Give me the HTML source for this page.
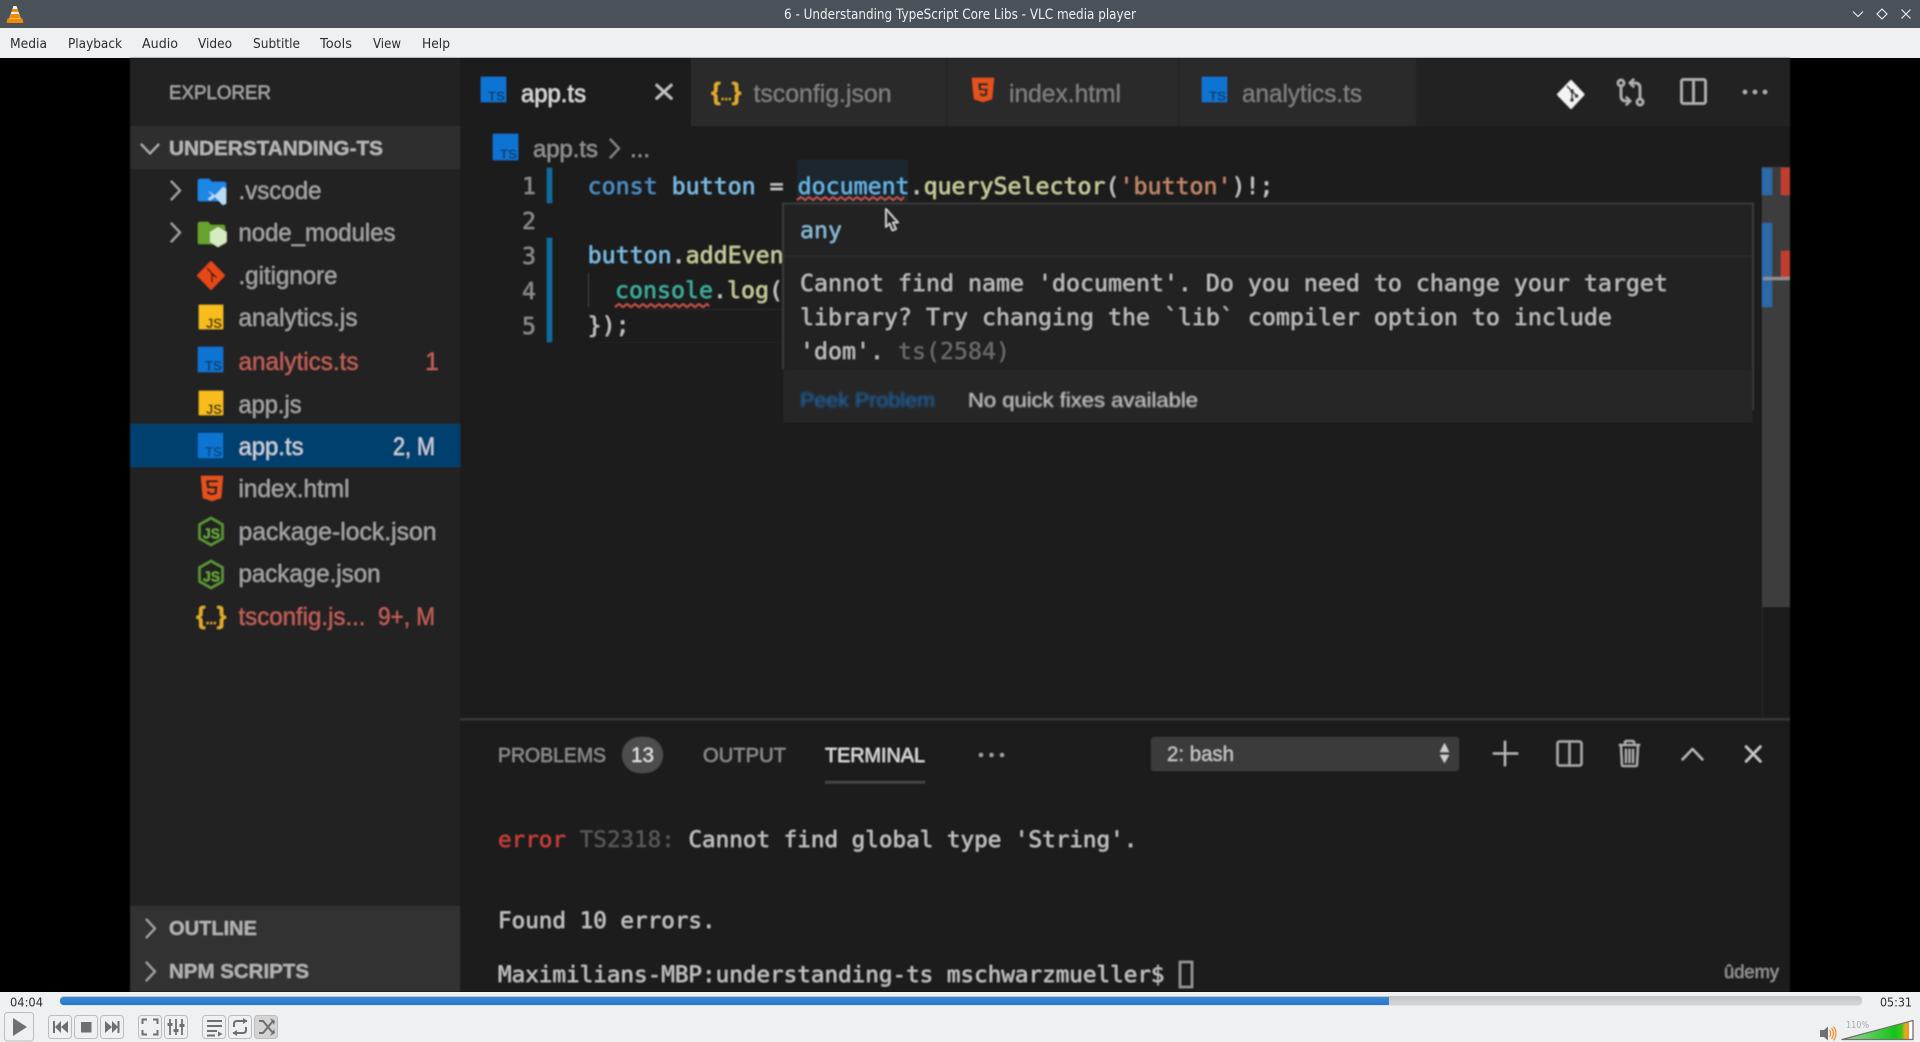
<!DOCTYPE html>
<html><head><meta charset="utf-8"><title>6 - Understanding TypeScript Core Libs - VLC media player</title>
<style>
html,body{margin:0;padding:0;background:#000;width:1920px;height:1042px;overflow:hidden}
svg{display:block}
text{white-space:pre}
.s{font-family:"Liberation Sans",sans-serif}
.m{font-family:"DejaVu Sans Mono","Liberation Mono",monospace}
.u{font-family:"DejaVu Sans","Liberation Sans",sans-serif}
.row{font-family:"Liberation Sans",sans-serif;font-size:25px;fill:#a6a6a6}
.code{font-family:"DejaVu Sans Mono","Liberation Mono",monospace;font-size:23.25px}
.term{font-family:"DejaVu Sans Mono","Liberation Mono",monospace;font-size:22.6px;fill:#c6c6c6}
.tb{fill:none;stroke:#bdbdbd;stroke-width:1}
.ic{fill:#6f6f6f}
.menu{font-family:"DejaVu Sans","Liberation Sans",sans-serif;font-size:13px;fill:#2c2c2c}
</style></head><body>
<svg width="1920" height="1042" viewBox="0 0 1920 1042" xmlns="http://www.w3.org/2000/svg">
<defs>
<filter id="b1" x="-2%" y="-2%" width="104%" height="104%"><feGaussianBlur stdDeviation="0.8"/></filter>
<filter id="b2" x="-5%" y="-20%" width="110%" height="140%"><feGaussianBlur stdDeviation="1.200"/></filter>
<filter id="b3" x="-5%" y="-20%" width="110%" height="140%"><feGaussianBlur stdDeviation="0.5"/></filter>
<linearGradient id="gr" x1="0" y1="0" x2="0" y2="1"><stop offset="0" stop-color="#c2c3c4"/><stop offset="1" stop-color="#d6d7d8"/></linearGradient>
<linearGradient id="vol" x1="1841" y1="0" x2="1913" y2="0" gradientUnits="userSpaceOnUse"><stop offset="0" stop-color="#a6d99a"/><stop offset=".75" stop-color="#12c41a"/><stop offset=".84" stop-color="#40c418"/><stop offset=".9" stop-color="#f3a81c"/><stop offset=".94" stop-color="#f28a12"/><stop offset=".945" stop-color="#fff"/><stop offset="1" stop-color="#fff"/></linearGradient>
<linearGradient id="blue" x1="0" y1="0" x2="0" y2="1"><stop offset="0" stop-color="#3a8ada"/><stop offset="1" stop-color="#2775c6"/></linearGradient>
</defs>

<!-- window chrome -->
<rect width="1920" height="28" fill="#4a5159"/>
<rect y="28" width="1920" height="30" fill="#eff0f1"/>
<path d="M13.5 6h3l4.500 13h-12z" fill="#f7f7f2"/>
<path d="M12.600 9h4.800l1 3h-6.800zM11 14h8l1.300 4h-10.600z" fill="#f28a00"/>
<path d="M7.500 18.500h15l.8 3.500q0 1-1 1h-14.600q-1 0-1-1z" fill="#f28a00"/>
<text class="u" x="784" y="19" font-size="14" fill="#eef0f1" textLength="352" lengthAdjust="spacingAndGlyphs">6 - Understanding TypeScript Core Libs - VLC media player</text>
<path d="M1853 11.500l5 5 5-5" fill="none" stroke="#f0f0f0" stroke-width="1.100"/>
<path d="M1882 9l5 5-5 5-5-5z" fill="none" stroke="#f0f0f0" stroke-width="1.100"/>
<path d="M1901.500 9.500l9 9m0-9l-9 9" fill="none" stroke="#f0f0f0" stroke-width="1.100"/>

<text class="menu" x="10" y="48" textLength="37" lengthAdjust="spacingAndGlyphs">Media</text>
<text class="menu" x="68" y="48" textLength="54" lengthAdjust="spacingAndGlyphs">Playback</text>
<text class="menu" x="142" y="48" textLength="36" lengthAdjust="spacingAndGlyphs">Audio</text>
<text class="menu" x="198" y="48" textLength="34" lengthAdjust="spacingAndGlyphs">Video</text>
<text class="menu" x="253" y="48" textLength="47" lengthAdjust="spacingAndGlyphs">Subtitle</text>
<text class="menu" x="320" y="48" textLength="32" lengthAdjust="spacingAndGlyphs">Tools</text>
<text class="menu" x="373" y="48" textLength="28" lengthAdjust="spacingAndGlyphs">View</text>
<text class="menu" x="422" y="48" textLength="28" lengthAdjust="spacingAndGlyphs">Help</text>

<!-- video -->
<rect y="58" width="1920" height="934" fill="#000"/>
<g filter="url(#b1)">
<rect x="130" y="58" width="330" height="934" fill="#212121"/>
<rect x="460" y="58" width="1330" height="934" fill="#1c1c1c"/>
<rect x="460" y="58" width="1330" height="68" fill="#212121"/>

<!-- tabs -->
<rect x="460" y="58" width="231" height="68" fill="#1c1c1c"/>
<rect x="691" y="58" width="725" height="68" fill="#2a2a2a"/>
<rect x="946" y="58" width="1.500" height="68" fill="#212121"/>
<rect x="1178" y="58" width="1.500" height="68" fill="#212121"/>

<g transform="translate(481,77)"><rect width="25" height="25" fill="#0b74d1"/><text class="s" x="7" y="23.500" font-size="13" font-weight="bold" fill="#0c3f6d" textLength="17" lengthAdjust="spacingAndGlyphs">TS</text></g>
<text class="s" x="521" y="102" font-size="25" fill="#e0e0e0" textLength="65" lengthAdjust="spacingAndGlyphs">app.ts</text>
<path d="M656 84.500l16 14.500m0-14.500l-16 14.500" stroke="#c8c8c8" stroke-width="2.200" fill="none"/>

<text class="s" x="711" y="100" font-size="25" font-weight="bold" fill="#e2ae29">{<tspan font-size="13">...</tspan>}</text>
<text class="s" x="753.500" y="102" font-size="25" fill="#808080" textLength="138" lengthAdjust="spacingAndGlyphs">tsconfig.json</text>

<path d="M972 78h22l-2 21-9 3-9-3z" fill="#e5521c"/>
<path d="M978 83h10v2.500h-7l.4 3h6.400l-.7 7-3.600 1.200-3.600-1.200-.2-2.500h2.400l.1 1 1.300.4 1.300-.4.300-3.500h-6.400z" fill="#2a2a2a"/>
<text class="s" x="1009" y="102" font-size="25" fill="#808080" textLength="112" lengthAdjust="spacingAndGlyphs">index.html</text>

<g transform="translate(1202,77)"><rect width="25" height="25" fill="#0b74d1"/><text class="s" x="7" y="23.500" font-size="13" font-weight="bold" fill="#0c3f6d" textLength="17" lengthAdjust="spacingAndGlyphs">TS</text></g>
<text class="s" x="1242" y="102" font-size="25" fill="#808080" textLength="120" lengthAdjust="spacingAndGlyphs">analytics.ts</text>

<!-- editor actions -->
<path d="M1571 81l12.500 13.500-12.500 13.500-13-13.500z" fill="#f4f4f4" stroke="#f4f4f4" stroke-linejoin="round" stroke-width="1.500"/>
<path d="M1567 86l5 5.500v8m0-8l4.500 4" stroke="#333" stroke-width="1.800" fill="none"/>
<circle cx="1572" cy="100" r="2" fill="#333"/><circle cx="1576.500" cy="96" r="2" fill="#333"/><circle cx="1572" cy="91" r="2" fill="#333"/>
<g fill="none" stroke="#b5b5b5" stroke-width="2.200">
<circle cx="1621" cy="83" r="3"/><circle cx="1640" cy="102" r="3"/>
<path d="M1621 86v10q0 5 5 5h3M1640 99v-11q0-5-5-5h-3"/>
<path d="M1634 79l-4 4 4 4M1626 97l4 4-4 4"/>
<rect x="1681.500" y="79.500" width="24" height="24" rx="2"/><path d="M1693.500 79.500v24"/>
</g>
<circle cx="1745" cy="92" r="2" fill="#b5b5b5"/><circle cx="1755" cy="92" r="2" fill="#b5b5b5"/><circle cx="1765" cy="92" r="2" fill="#b5b5b5"/>

<!-- breadcrumb -->
<g transform="translate(493,134)"><rect width="25" height="26" fill="#0b74d1"/><text class="s" x="7" y="24.500" font-size="13" font-weight="bold" fill="#0c3f6d" textLength="17" lengthAdjust="spacingAndGlyphs">TS</text></g>
<text class="s" x="533" y="157" font-size="24" fill="#949494" textLength="65" lengthAdjust="spacingAndGlyphs">app.ts</text>
<path d="M610 139l9 9.500-9 9.500" fill="none" stroke="#8a8a8a" stroke-width="1.800"/>
<text class="s" x="630" y="157" font-size="24" fill="#949494">...</text>

<!-- gutter -->
<g class="code" fill="#8d8d8d" font-size="25">
<text x="522" y="194">1</text><text x="522" y="229">2</text><text x="522" y="264">3</text><text x="522" y="299">4</text><text x="522" y="334">5</text>
</g>
<rect x="547" y="168" width="5" height="35" fill="#0c6d9c"/>
<rect x="547" y="238" width="5" height="104" fill="#0c6d9c"/>
<rect x="588" y="273" width="1" height="34" fill="#3a3a3a"/>

<!-- code -->
<rect x="797" y="160" width="111" height="42" fill="#1d262e"/>
<text class="code" x="587.600" y="194"><tspan fill="#4f93c8">const</tspan><tspan fill="#7fc0e6"> button</tspan><tspan fill="#c8c8c8"> = </tspan><tspan fill="#6ab8e8">document</tspan><tspan fill="#c8c8c8">.</tspan><tspan fill="#d0d0a0">querySelector</tspan><tspan fill="#c8c8c8">(</tspan><tspan fill="#c48a6c">'button'</tspan><tspan fill="#c8c8c8">)!;</tspan></text>
<path d="M797 200l4 -3 4 3 4-3 4 3 4-3 4 3 4-3 4 3 4-3 4 3 4-3 4 3 4-3 4 3 4-3 4 3 4-3 4 3 4-3 4 3 4-3 4 3 4-3 4 3 4-3 4 3 3-3" fill="none" stroke="#c9584a" stroke-width="1.500"/>
<text class="code" x="587.600" y="263"><tspan fill="#7fc0e6">button</tspan><tspan fill="#c8c8c8">.</tspan><tspan fill="#d0d0a0">addEven</tspan></text>
<text class="code" x="615" y="298"><tspan fill="#3fb3a0">console</tspan><tspan fill="#c8c8c8">.</tspan><tspan fill="#d0d0a0">log</tspan><tspan fill="#c8c8c8">(</tspan></text>
<path d="M615 307l4-3 4 3 4-3 4 3 4-3 4 3 4-3 4 3 4-3 4 3 4-3 4 3 4-3 4 3 4-3 4 3 4-3 4 3 4-3 4 3 4-3 4 3 4-3 2 2" fill="none" stroke="#c9584a" stroke-width="1.500"/>
<text class="code" x="587.600" y="333" fill="#c8c8c8">});</text>
<rect x="640" y="309" width="143" height="1" fill="#2b2b2b"/>
<rect x="600" y="342" width="183" height="1" fill="#242424"/>

<!-- overview ruler -->
<rect x="1762" y="167" width="28" height="440" fill="#3c3c3c"/>
<rect x="1762" y="607" width="1" height="112" fill="#262626"/>
<rect x="1762" y="168" width="10" height="27" fill="#2b6aa6"/>
<rect x="1781" y="168" width="9" height="27" fill="#c23c2e"/>
<rect x="1762" y="223" width="10" height="84" fill="#2b6aa6"/>
<rect x="1781" y="251" width="9" height="28" fill="#c23c2e"/>
<rect x="1763" y="277" width="27" height="3" fill="#8f8f8f"/>

<!-- hover -->
<rect x="783" y="203.500" width="970" height="219" fill="#212121"/>
<path d="M783 369V203.500H1753V410" fill="none" stroke="#3b3b3b" stroke-width="1.800"/>
<rect x="784" y="255.500" width="968" height="1.200" fill="#2e2e2e"/>
<rect x="784" y="370" width="968" height="52" fill="#262626" filter="url(#b2)"/>
<text class="code" x="800" y="238" fill="#8bbdd8">any</text>
<g class="code" fill="#c0c0c0">
<text x="800" y="291">Cannot find name 'document'. Do you need to change your target</text>
<text x="800" y="325">library? Try changing the `lib` compiler option to include</text>
<text x="800" y="359">'dom'. <tspan fill="#6c6c6c">ts(2584)</tspan></text>
</g>
<text class="s" x="800" y="407" font-size="20.500" fill="#1d6db8" textLength="135" lengthAdjust="spacingAndGlyphs" filter="url(#b2)">Peek Problem</text>
<text class="s" x="968" y="407" font-size="20.500" fill="#cdcdcd" textLength="230" lengthAdjust="spacingAndGlyphs" filter="url(#b3)">No quick fixes available</text>

<!-- sidebar -->
<text class="s" x="169" y="99" font-size="19.500" fill="#a8a8a8" textLength="102" lengthAdjust="spacingAndGlyphs">EXPLORER</text>
<rect x="130" y="126" width="330" height="43" fill="#2f2f2f"/>
<path d="M141 144l9 9.500 9-9.500" fill="none" stroke="#b4b4b4" stroke-width="1.800"/>
<text class="s" x="169" y="155" font-size="20.500" font-weight="bold" fill="#b8b8b8" textLength="214" lengthAdjust="spacingAndGlyphs">UNDERSTANDING-TS</text>

<path d="M171 181l9 9.500-9 9.500M171 223l9 9.500-9 9.500" fill="none" stroke="#a8a8a8" stroke-width="1.800"/>

<!-- .vscode icon -->
<path d="M198 181q0-2 2-2h9l3 3h12q2 0 2 2v16q0 1-2 1h-24q-2 0-2-1z" fill="#1e88e5"/>
<path d="M210 192l5 3.500 8-8.500 3 1.500v15l-3 1.500-8-8-5 3.500-2-1.500 4.500-4-4.500-4z" fill="#b9dcf6"/>
<text class="row" x="238.500" y="199" textLength="83" lengthAdjust="spacingAndGlyphs">.vscode</text>
<!-- node_modules icon -->
<path d="M198 224q0-2 2-2h8l3 3h12q2 0 2 2v16q0 1-2 1h-23q-2 0-2-1z" fill="#69a32e"/>
<path d="M218 227l8.500 5v10l-8.500 5-8-5v-10z" fill="#d4ecc0"/>
<text class="row" x="238.500" y="241" textLength="157" lengthAdjust="spacingAndGlyphs">node_modules</text>
<!-- gitignore -->
<path d="M211 262l13 13.500-13 13.500-13-13.500z" fill="#e64a19" stroke="#e64a19" stroke-linejoin="round" stroke-width="1.500"/>
<path d="M207 268l5 5.500v9m0-9l4.500 4" stroke="#3a1a10" stroke-width="1.600" fill="none"/>
<text class="row" x="238.500" y="284" textLength="99" lengthAdjust="spacingAndGlyphs">.gitignore</text>
<!-- analytics.js -->
<g transform="translate(199,305)"><rect width="24" height="24" fill="#f8bd1c"/><text class="s" x="7" y="23" font-size="13.500" font-weight="bold" fill="#2a2208" textLength="16" lengthAdjust="spacingAndGlyphs">JS</text></g>
<text class="row" x="238.500" y="326" textLength="119" lengthAdjust="spacingAndGlyphs">analytics.js</text>
<!-- analytics.ts -->
<g transform="translate(198,347)"><rect width="25" height="25" fill="#0b74d1"/><text class="s" x="7" y="23.500" font-size="13.500" font-weight="bold" fill="#0c3f6d" textLength="17" lengthAdjust="spacingAndGlyphs">TS</text></g>
<text class="row" x="238.500" y="370" style="fill:#c0625a" textLength="120" lengthAdjust="spacingAndGlyphs">analytics.ts</text>
<text class="row" x="425" y="370" style="fill:#c0625a" font-size="24">1</text>
<!-- app.js -->
<g transform="translate(199,391)"><rect width="24" height="24" fill="#f8bd1c"/><text class="s" x="7" y="23" font-size="13.500" font-weight="bold" fill="#2a2208" textLength="16" lengthAdjust="spacingAndGlyphs">JS</text></g>
<text class="row" x="238.500" y="413" textLength="63" lengthAdjust="spacingAndGlyphs">app.js</text>
<!-- app.ts -->
<rect x="130" y="424" width="330" height="43" fill="#003f6e"/>
<g transform="translate(198,433)"><rect width="25" height="25" fill="#0b74d1"/><text class="s" x="7" y="23.500" font-size="13.500" font-weight="bold" fill="#0c4a82" textLength="17" lengthAdjust="spacingAndGlyphs">TS</text></g>
<text class="row" x="238.500" y="455" style="fill:#c7d6e2" textLength="65" lengthAdjust="spacingAndGlyphs">app.ts</text>
<text class="row" x="393" y="455" style="fill:#c7d6e2" textLength="42" lengthAdjust="spacingAndGlyphs">2, M</text>
<!-- index.html -->
<path d="M201 476h22l-2 22-9 3-9-3z" fill="#e5521c"/>
<path d="M206 480h12v2.500h-9l.3 3.500h8.200l-.7 8-4.800 1.500-4.800-1.500-.2-3h2.500l.1 1.300 2.400.7 2.400-.7.300-3.800h-7.700z" fill="#212121"/>
<text class="row" x="238.500" y="497" textLength="111" lengthAdjust="spacingAndGlyphs">index.html</text>
<!-- package-lock -->
<path d="M211 518l11.500 6.500v14l-11.500 6.500-11.500-6.500v-14z" fill="none" stroke="#5c9a36" stroke-width="2.200"/>
<text class="s" x="203" y="538.500" font-size="15" font-weight="bold" fill="#6aa83e" textLength="17" lengthAdjust="spacingAndGlyphs">JS</text>
<text class="row" x="238.500" y="540" textLength="198" lengthAdjust="spacingAndGlyphs">package-lock.json</text>
<!-- package.json -->
<path d="M211 561l11.500 6.500v14l-11.500 6.500-11.500-6.500v-14z" fill="none" stroke="#5c9a36" stroke-width="2.200"/>
<text class="s" x="203" y="581.500" font-size="15" font-weight="bold" fill="#6aa83e" textLength="17" lengthAdjust="spacingAndGlyphs">JS</text>
<text class="row" x="238.500" y="582" textLength="142" lengthAdjust="spacingAndGlyphs">package.json</text>
<!-- tsconfig -->
<text class="s" x="196" y="624" font-size="25" font-weight="bold" fill="#e2ae29">{<tspan font-size="13">...</tspan>}</text>
<text class="row" x="238.500" y="625" style="fill:#c0625a" textLength="127" lengthAdjust="spacingAndGlyphs">tsconfig.js...</text>
<text class="row" x="378" y="625" style="fill:#c0625a" textLength="57" lengthAdjust="spacingAndGlyphs">9+, M</text>

<rect x="130" y="906" width="330" height="86" fill="#333333"/>
<path d="M146 919l9 9.500-9 9.500M146 962l9 9.500-9 9.500" fill="none" stroke="#a8a8a8" stroke-width="1.800"/>
<text class="s" x="169" y="935" font-size="20.500" font-weight="bold" fill="#b4b4b4" textLength="88" lengthAdjust="spacingAndGlyphs">OUTLINE</text>
<text class="s" x="169" y="978" font-size="20.500" font-weight="bold" fill="#b4b4b4" textLength="140" lengthAdjust="spacingAndGlyphs">NPM SCRIPTS</text>

<!-- panel -->
<rect x="460" y="718" width="1330" height="2.500" fill="#353535"/>
<text class="s" x="498" y="762" font-size="20.500" fill="#909090" textLength="108" lengthAdjust="spacingAndGlyphs">PROBLEMS</text>
<rect x="622" y="737" width="41" height="36" rx="18" fill="#4d4d4d"/>
<text class="s" x="631" y="762" font-size="21" fill="#e6e6e6" textLength="23" lengthAdjust="spacingAndGlyphs">13</text>
<text class="s" x="703" y="762" font-size="20.500" fill="#909090" textLength="83" lengthAdjust="spacingAndGlyphs">OUTPUT</text>
<text class="s" x="825" y="762" font-size="20.500" fill="#e2e2e2" textLength="100" lengthAdjust="spacingAndGlyphs">TERMINAL</text>
<rect x="825" y="781" width="100" height="2.500" fill="#444"/>
<circle cx="981" cy="755" r="1.900" fill="#a8a8a8"/><circle cx="991.500" cy="755" r="1.900" fill="#a8a8a8"/><circle cx="1002" cy="755" r="1.900" fill="#a8a8a8"/>

<rect x="1151" y="737" width="308" height="34" rx="3" fill="#3a3a3a"/>
<text class="s" x="1167" y="761" font-size="21" fill="#c8c8c8" textLength="67" lengthAdjust="spacingAndGlyphs">2: bash</text>
<path d="M1444.500 743l4.500 9h-9zM1444.500 763l4.500-8h-9z" fill="#cfcfcf"/>
<path d="M1505 741v25M1493 753.500h25" stroke="#c4c4c4" stroke-width="1.800" fill="none"/>
<g fill="none" stroke="#b5b5b5" stroke-width="1.800">
<rect x="1557.500" y="741.500" width="24" height="24" rx="2"/><path d="M1569.500 741.500v24"/>
<path d="M1619 745h21M1625 745v-2.500q0-1.500 1.500-1.500h6q1.500 0 1.500 1.500v2.500M1621 745l1 20q0 1 1.500 1h12q1.500 0 1.500-1l1-20M1626 749v14M1629.500 749v14M1633 749v14"/>
</g>
<path d="M1682 760l10.500-11 10.500 11" fill="none" stroke="#c4c4c4" stroke-width="1.800"/>
<path d="M1745.500 746l15.500 16m0-16l-15.500 16" fill="none" stroke="#d0d0d0" stroke-width="2"/>

<!-- terminal -->
<text class="term" x="498" y="847"><tspan fill="#c9433a">error</tspan> <tspan fill="#5a5a5a">TS2318:</tspan> Cannot find global type 'String'.</text>
<text class="term" x="498" y="928">Found 10 errors.</text>
<text class="term" x="498" y="982">Maximilians-MBP:understanding-ts mschwarzmueller$</text>
<rect x="1180" y="962" width="12" height="25" fill="none" stroke="#9a9a9a" stroke-width="2"/>
<text class="s" x="1724" y="978" font-size="18.500" fill="#9a9a9a" textLength="55" lengthAdjust="spacingAndGlyphs">ûdemy</text>

<!-- mouse cursor -->
<path d="M886 209l12 13.500h-5l3 6.500-3.500 1.500-3-7-3.500 3.500z" fill="#222" stroke="#e8e8e8" stroke-width="1.200" stroke-linejoin="round"/>
</g>

<!-- controls -->
<rect y="992" width="1920" height="50" fill="#eff0f1"/>
<text class="u" x="10" y="1006.500" font-size="12" fill="#2c3134" textLength="33" lengthAdjust="spacingAndGlyphs">04:04</text>
<text class="u" x="1880" y="1006.500" font-size="12" fill="#2c3134" textLength="32" lengthAdjust="spacingAndGlyphs">05:31</text>
<rect x="60" y="996" width="1802" height="9.500" rx="4" fill="url(#gr)"/>
<path d="M64 997H1389V1005H64q-4 0-4-4t4-4z" fill="url(#blue)"/>

<rect class="tb" x="4.500" y="1012.500" width="29" height="28.500" rx="3"/>
<path class="ic" d="M13 1018l14 9-14 9z"/>
<rect class="tb" x="48.500" y="1015.500" width="23" height="23" rx="3"/>
<path class="ic" d="M53 1021h2v12h-2zM61 1021v12l-6-6zM68 1021v12l-7-6z"/>
<rect class="tb" x="74.500" y="1015.500" width="23" height="23" rx="3"/>
<rect class="ic" x="81" y="1022" width="10.500" height="10.500"/>
<rect class="tb" x="100.500" y="1015.500" width="23" height="23" rx="3"/>
<path class="ic" d="M105 1021l7 6-7 6zM112 1021l6 6-6 6zM117.500 1021h2v12h-2z"/>
<rect class="tb" x="138.500" y="1015.500" width="23" height="23" rx="3"/>
<path d="M142.500 1024v-4.500h4.500M153 1019.500h4.500v4.500M157.500 1030v4.500h-4.500M147 1034.500h-4.500v-4.500" fill="none" stroke="#6f6f6f" stroke-width="2"/>
<rect class="tb" x="164.500" y="1015.500" width="23" height="23" rx="3"/>
<path d="M170 1019v16M176 1019v16M182 1019v16" stroke="#6f6f6f" stroke-width="1.800" fill="none"/>
<path class="ic" d="M167.500 1023h5v3h-5zM173.500 1029h5v3h-5zM179.500 1024h5v3h-5z"/>
<rect class="tb" x="202.500" y="1015.500" width="23" height="23" rx="3"/>
<path d="M207 1021h15M207 1026h15M207 1031h10M207 1035.500h8" stroke="#6f6f6f" stroke-width="2" fill="none"/>
<path class="ic" d="M218 1031.500l4.500 2.500-4.500 2.500z"/>
<rect class="tb" x="228.500" y="1015.500" width="23" height="23" rx="3"/>
<path d="M234 1027v-3q0-3 3-3h10M246 1027v3q0 3-3 3h-10" fill="none" stroke="#6f6f6f" stroke-width="2"/>
<path class="ic" d="M243 1018l4.500 3-4.500 3zM237 1030l-4.500 3 4.500 3z"/>
<rect x="254.500" y="1015.500" width="23" height="23" rx="3" fill="#d4d4d4" stroke="#bdbdbd"/>
<path d="M259 1021h4l10 12h1M259 1033h4l10-12h1" fill="none" stroke="#6f6f6f" stroke-width="2"/>
<path class="ic" d="M270 1018l5 3-1 4zM270 1036l5-3-1-4z"/>

<!-- volume -->
<path class="ic" d="M1820 1030h4l4-3.500v14l-4-3.500h-4z"/>
<path d="M1829.500 1030q2.500 3.500 0 7M1831.500 1028q4 5.500 0 11M1833.500 1026.500q5 7 0 14" fill="none" stroke="#f0861a" stroke-width="1.100"/>
<text class="u" x="1846" y="1028" font-size="9.500" fill="#a9a9a9" textLength="23" lengthAdjust="spacingAndGlyphs">110%</text>
<path d="M1842 1039.500L1913 1020.500V1039.500Z" fill="url(#vol)" stroke="#707070" stroke-width="1.300" stroke-linejoin="round"/>
</svg>
</body></html>
